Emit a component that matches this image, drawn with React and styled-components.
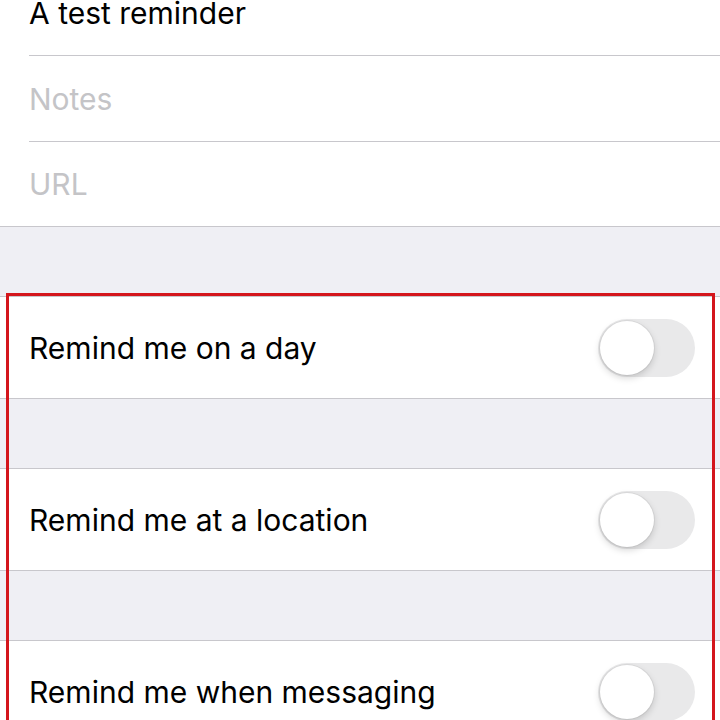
import React from "react";
import styled, { createGlobalStyle } from "styled-components";

const GlobalStyle = createGlobalStyle`
	html, body {
		margin: 0;
		padding: 0;
		background: #efeff4;
		overflow: hidden;
	}
	body {
		font-family: Inter, "Liberation Sans", sans-serif;
		-webkit-font-smoothing: antialiased;
	}
`;

const Screen = styled.div`
	position: relative;
	width: 720px;
	height: 720px;
	overflow: hidden;
	background: #efeff4;
`;

const Group = styled.div`
	background: #ffffff;
	border-top: 1px solid #c8c7cc;
	border-bottom: 1px solid #c8c7cc;
	margin-top: ${(p) => p.$gap || 0}px;
`;

const TopGroup = styled(Group)`
	margin-top: -30px;
	border-top: none;
`;

const FieldRow = styled.div`
	height: ${(p) => (p.$last ? 84 : 85)}px;
	display: flex;
	align-items: center;
	margin-left: 29px;
	border-bottom: ${(p) => (p.$last ? "none" : "1px solid #c8c7cc")};
	font-size: 30px;
	color: ${(p) => (p.$placeholder ? "#c4c4c7" : "#000000")};
`;

const ToggleRow = styled.div`
	height: 101px;
	display: flex;
	align-items: center;
	justify-content: space-between;
	padding: 0 25px 0 29px;
	font-size: 30px;
	color: #000000;
`;

const Track = styled.div`
	position: relative;
	width: 97px;
	height: 58px;
	border-radius: 29px;
	background: #e9e9ea;
	flex-shrink: 0;
`;

const Knob = styled.div`
	position: absolute;
	left: 2px;
	top: 2px;
	width: 54px;
	height: 54px;
	border-radius: 50%;
	background: #ffffff;
	box-shadow: 0 3px 7px rgba(0, 0, 0, 0.17), 0 0 0 1px rgba(0, 0, 0, 0.05);
`;

const Highlight = styled.div`
	position: absolute;
	left: 6px;
	top: 293px;
	width: 703px;
	height: 500px;
	border: 3px solid #d4161c;
	pointer-events: none;
`;

function Toggle() {
	return (
		<Track>
			<Knob />
		</Track>
	);
}

const reminders = [
	"Remind me on a day",
	"Remind me at a location",
	"Remind me when messaging",
];

export default function App() {
	return (
		<>
			<GlobalStyle />
			<Screen>
				<TopGroup>
					<FieldRow>A test reminder</FieldRow>
					<FieldRow $placeholder>Notes</FieldRow>
					<FieldRow $placeholder $last>
						URL
					</FieldRow>
				</TopGroup>
				{reminders.map((label) => (
					<Group key={label} $gap={69}>
						<ToggleRow>
							<span>{label}</span>
							<Toggle />
						</ToggleRow>
					</Group>
				))}
				<Highlight />
			</Screen>
		</>
	);
}
